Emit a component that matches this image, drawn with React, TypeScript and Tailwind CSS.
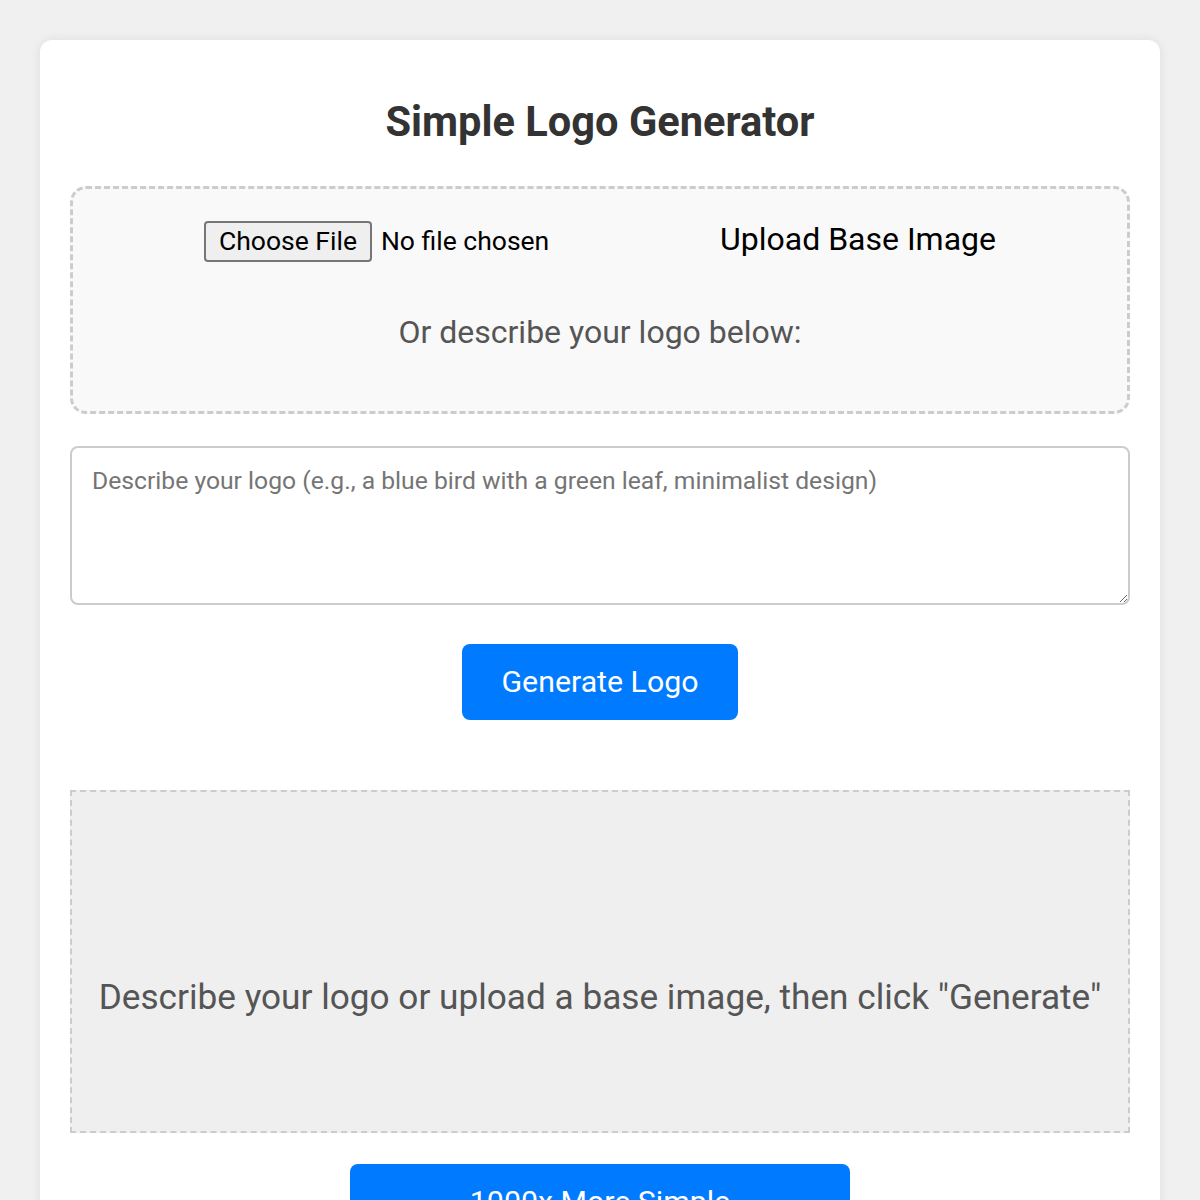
import React from 'react';

export default function App() {
  return (
    <div className="min-h-screen bg-[#f0f0f0] pt-[40px] px-[40px] font-['Roboto',sans-serif]">
      <div className="bg-white rounded-[12px] shadow-[0_0_12px_rgba(0,0,0,0.08)] px-[30px] pt-[57px] pb-[40px]">
        <h1 className="text-center text-[41.6px] leading-[50px] font-bold text-[#333]">Simple Logo Generator</h1>

        <div className="mt-[39px] h-[228px] border-[3px] border-dashed border-[#ccc] rounded-[16px] bg-[#f9f9f9] flex flex-col items-center pt-[30px]">
          <div className="flex items-center">
            <div className="flex items-center w-[346px]">
              <span className="h-[41px] px-[13px] flex items-center border-2 border-[#767676] rounded-[4px] bg-[#efefef] text-[26.5px] text-black">Choose File</span>
              <span className="ml-[9px] text-[26.5px] text-black">No file chosen</span>
            </div>
            <span className="ml-[170px] mb-[4px] text-[32px] text-black leading-[40px]">Upload Base Image</span>
          </div>
          <p className="mt-[49px] text-[32px] text-[#555] leading-[40px]">Or describe your logo below:</p>
        </div>

        <textarea
          className="mt-[32px] block w-full h-[159px] border-2 border-[#ccc] rounded-[8px] px-[20px] py-[18px] text-[24.7px] leading-[30px] text-[#333] placeholder:text-[#757575] bg-white outline-none"
          placeholder="Describe your logo (e.g., a blue bird with a green leaf, minimalist design)"
        />

        <div className="mt-[39px] flex justify-center">
          <button className="w-[276px] h-[76px] rounded-[8px] bg-[#007bff] text-white text-[30.3px]">Generate Logo</button>
        </div>

        <div className="mt-[70px] h-[343px] border-2 border-dashed border-[#ccc] bg-[#efefef] flex items-center justify-center pt-[70px]">
          <p className="text-[35.2px] text-[#555] leading-[44px] text-center whitespace-nowrap">Describe your logo or upload a base image, then click "Generate"</p>
        </div>

        <div className="mt-[31px] flex justify-center">
          <button className="w-[500px] h-[76px] rounded-[8px] bg-[#007bff] text-white text-[30.3px]">1000x More Simple</button>
        </div>
      </div>
    </div>
  );
}
